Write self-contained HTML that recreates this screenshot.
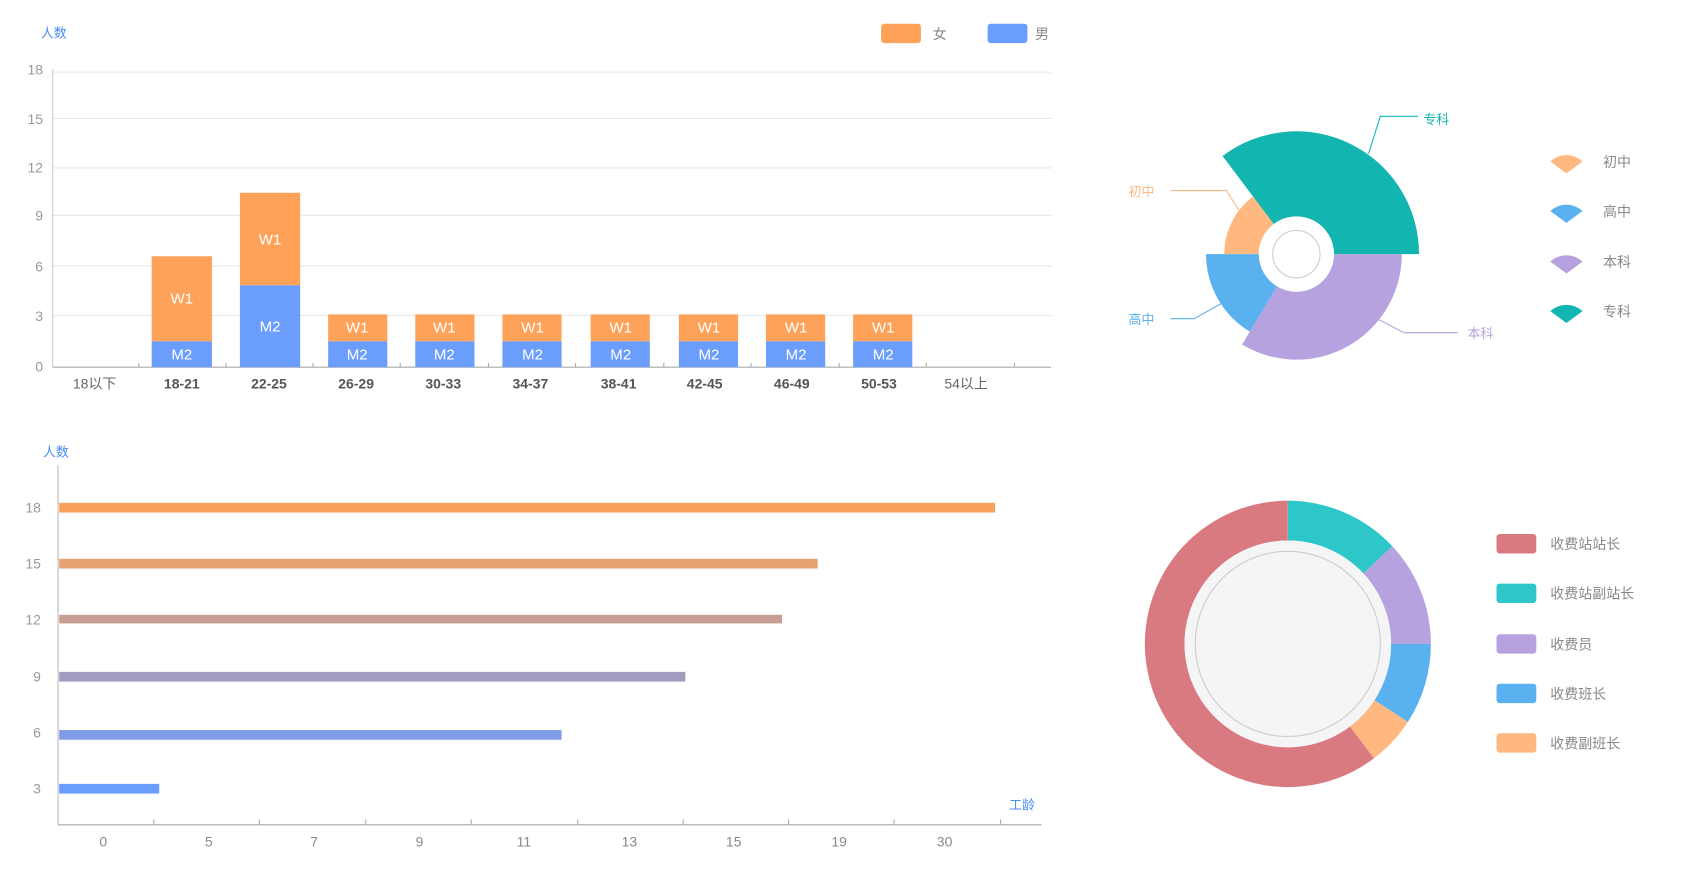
<!DOCTYPE html>
<html><head><meta charset="utf-8"><style>
html,body{margin:0;padding:0;background:#fff;}
svg{display:block;}
text{font-family:"Liberation Sans","Noto Sans CJK SC",sans-serif;}
</style></head><body>
<svg width="1688" height="884" viewBox="0 0 1569 821" preserveAspectRatio="none" xmlns="http://www.w3.org/2000/svg">
<text x="38" y="35" font-size="12" fill="#4a8df8">人数</text>
<rect x="819" y="22" width="37" height="18" rx="3" fill="#fea25a"/>
<text x="867" y="36" font-size="13" fill="#888">女</text>
<rect x="918" y="22" width="37" height="18" rx="3" fill="#6b9dfd"/>
<text x="962" y="36" font-size="13" fill="#888">男</text>
<g stroke="#e6e6e6" stroke-width="1">
<line x1="49" y1="67" x2="977" y2="67"/><line x1="49" y1="110" x2="977" y2="110"/>
<line x1="49" y1="156" x2="977" y2="156"/><line x1="49" y1="200" x2="977" y2="200"/>
<line x1="49" y1="247" x2="977" y2="247"/><line x1="49" y1="293" x2="977" y2="293"/>
</g>
<line x1="49" y1="64" x2="49" y2="341" stroke="#ccc"/>
<line x1="49" y1="341" x2="977" y2="341" stroke="#aaa"/>
<g stroke="#aaa"><line x1="129" y1="341" x2="129" y2="337"/><line x1="210" y1="341" x2="210" y2="337"/><line x1="291" y1="341" x2="291" y2="337"/><line x1="372" y1="341" x2="372" y2="337"/><line x1="454" y1="341" x2="454" y2="337"/><line x1="535" y1="341" x2="535" y2="337"/><line x1="617" y1="341" x2="617" y2="337"/><line x1="698" y1="341" x2="698" y2="337"/><line x1="780" y1="341" x2="780" y2="337"/><line x1="861" y1="341" x2="861" y2="337"/><line x1="943" y1="341" x2="943" y2="337"/></g>
<g font-size="13" fill="#999" text-anchor="end">
<text x="40" y="69">18</text><text x="40" y="115">15</text><text x="40" y="160">12</text><text x="40" y="205">9</text><text x="40" y="252">6</text><text x="40" y="298">3</text><text x="40" y="345">0</text>
</g>
<g fill="#fea25a">
<rect x="141" y="238" width="56" height="79"/><rect x="223" y="179" width="56" height="86"/>
<rect x="305" y="292" width="55" height="25"/><rect x="386" y="292" width="55" height="25"/><rect x="467" y="292" width="55" height="25"/><rect x="549" y="292" width="55" height="25"/><rect x="631" y="292" width="55" height="25"/><rect x="712" y="292" width="55" height="25"/><rect x="793" y="292" width="55" height="25"/>
</g>
<g fill="#6b9dfd">
<rect x="141" y="317" width="56" height="24"/><rect x="223" y="265" width="56" height="76"/>
<rect x="305" y="317" width="55" height="24"/><rect x="386" y="317" width="55" height="24"/><rect x="467" y="317" width="55" height="24"/><rect x="549" y="317" width="55" height="24"/><rect x="631" y="317" width="55" height="24"/><rect x="712" y="317" width="55" height="24"/><rect x="793" y="317" width="55" height="24"/>
</g>
<g font-size="14" fill="#fff" text-anchor="middle">
<text x="169" y="282">W1</text><text x="169" y="334">M2</text>
<text x="251" y="227">W1</text><text x="251" y="308">M2</text>
<text x="332" y="309">W1</text><text x="332" y="334">M2</text>
<text x="413" y="309">W1</text><text x="413" y="334">M2</text>
<text x="495" y="309">W1</text><text x="495" y="334">M2</text>
<text x="577" y="309">W1</text><text x="577" y="334">M2</text>
<text x="659" y="309">W1</text><text x="659" y="334">M2</text>
<text x="740" y="309">W1</text><text x="740" y="334">M2</text>
<text x="821" y="309">W1</text><text x="821" y="334">M2</text>
</g>
<g font-size="13" text-anchor="middle" fill="#555">
<text x="88" y="361" fill="#666">18以下</text>
<text x="169" y="361" font-weight="bold">18-21</text><text x="250" y="361" font-weight="bold">22-25</text><text x="331" y="361" font-weight="bold">26-29</text><text x="412" y="361" font-weight="bold">30-33</text><text x="493" y="361" font-weight="bold">34-37</text><text x="575" y="361" font-weight="bold">38-41</text><text x="655" y="361" font-weight="bold">42-45</text><text x="736" y="361" font-weight="bold">46-49</text><text x="817" y="361" font-weight="bold">50-53</text>
<text x="898" y="361" fill="#666">54以上</text>
</g>

<text x="40" y="424" font-size="12" fill="#4a8df8">人数</text>
<text x="938" y="752" font-size="12" fill="#4a8df8">工龄</text>
<line x1="54" y1="432" x2="54" y2="766" stroke="#bbb"/>
<line x1="54" y1="766" x2="968" y2="766" stroke="#aaa"/>
<g stroke="#aaa"><line x1="143" y1="766" x2="143" y2="761"/><line x1="241" y1="766" x2="241" y2="761"/><line x1="340" y1="766" x2="340" y2="761"/><line x1="438" y1="766" x2="438" y2="761"/><line x1="537" y1="766" x2="537" y2="761"/><line x1="635" y1="766" x2="635" y2="761"/><line x1="733" y1="766" x2="733" y2="761"/><line x1="831" y1="766" x2="831" y2="761"/><line x1="930" y1="766" x2="930" y2="761"/></g>
<g font-size="13" fill="#999" text-anchor="end">
<text x="38" y="476">18</text><text x="38" y="528">15</text><text x="38" y="580">12</text><text x="38" y="633">9</text><text x="38" y="685">6</text><text x="38" y="737">3</text>
</g>
<g font-size="13" fill="#888" text-anchor="middle">
<text x="96" y="786">0</text><text x="194" y="786">5</text><text x="292" y="786">7</text><text x="390" y="786">9</text><text x="487" y="786">11</text><text x="585" y="786">13</text><text x="682" y="786">15</text><text x="780" y="786">19</text><text x="878" y="786">30</text>
</g>
<rect x="55" y="467" width="870" height="9" fill="#f9a05a"/>
<rect x="55" y="519" width="705" height="9" fill="#e6a072"/>
<rect x="55" y="571" width="672" height="8" fill="#c89e94"/>
<rect x="55" y="624" width="582" height="9" fill="#a09cc0"/>
<rect x="55" y="678" width="467" height="9" fill="#7e9be6"/>
<rect x="55" y="728" width="93" height="9" fill="#6b9dfd"/>

<path d="M1138,236 A67,67 0 0 1 1164.7,182.5 L1183.9,208 A35,35 0 0 0 1170,236 Z" fill="#ffb980"/>
<path d="M1136.4,144.9 A114,114 0 0 1 1319,236 L1240,236 A35,35 0 0 0 1183.9,208 Z" fill="#13b5b1"/>
<path d="M1303,236 A98,98 0 0 1 1154.5,320 L1187,266 A35,35 0 0 0 1240,236 Z" fill="#b6a2de"/>
<path d="M1161.7,308 A84,84 0 0 1 1121,236 L1170,236 A35,35 0 0 0 1187,266 Z" fill="#5ab1ef"/>
<circle cx="1205" cy="236" r="22" fill="#fff" stroke="#ccc"/>
<polyline points="1272,143 1283,108 1318,108" fill="none" stroke="#13b5b1"/>
<polyline points="1088,177 1140,177 1152,196" fill="none" stroke="#ffb980"/>
<polyline points="1088,296 1110,296 1135,282" fill="none" stroke="#5ab1ef"/>
<polyline points="1282,297 1305,309 1355,309" fill="none" stroke="#b6a2de"/>
<g font-size="12">
<text x="1323" y="115" fill="#13b5b1">专科</text>
<text x="1049" y="182" fill="#ffb980">初中</text>
<text x="1049" y="301" fill="#5ab1ef">高中</text>
<text x="1364" y="314" fill="#b6a2de">本科</text>
</g>
<path d="M1441,150 A22,22 0 0 1 1471,150 L1456,161 Z" fill="#ffb980"/>
<path d="M1441,196 A22,22 0 0 1 1471,196 L1456,207 Z" fill="#5ab1ef"/>
<path d="M1441,243 A22,22 0 0 1 1471,243 L1456,254 Z" fill="#b6a2de"/>
<path d="M1441,289 A22,22 0 0 1 1471,289 L1456,300 Z" fill="#13b5b1"/>
<g font-size="13" fill="#888">
<text x="1490" y="155">初中</text><text x="1490" y="201">高中</text><text x="1490" y="248">本科</text><text x="1490" y="294">专科</text>
</g>

<path d="M1197,465 A133,133 0 0 1 1294.2,507.3 L1267.2,532.5 A96,96 0 0 0 1197,502 Z" fill="#2ec7c9"/>
<path d="M1294.2,507.3 A133,133 0 0 1 1330,598 L1293,598 A96,96 0 0 0 1267.2,532.5 Z" fill="#b6a2de"/>
<path d="M1330,598 A133,133 0 0 1 1308.6,670.5 L1277.5,650.3 A96,96 0 0 0 1293,598 Z" fill="#5ab1ef"/>
<path d="M1308.6,670.5 A133,133 0 0 1 1277.1,704.3 L1254.8,674.7 A96,96 0 0 0 1277.5,650.3 Z" fill="#ffb980"/>
<path d="M1277.1,704.3 A133,133 0 1 1 1197,465 L1197,502 A96,96 0 1 0 1254.8,674.7 Z" fill="#d87a80"/>
<circle cx="1197" cy="598" r="96" fill="#f5f5f5"/>
<circle cx="1197" cy="598" r="86" fill="#f5f5f5" stroke="#ccc"/>
<rect x="1391" y="496" width="37" height="18" rx="3" fill="#d87a80"/>
<rect x="1391" y="542" width="37" height="18" rx="3" fill="#2ec7c9"/>
<rect x="1391" y="589" width="37" height="18" rx="3" fill="#b6a2de"/>
<rect x="1391" y="635" width="37" height="18" rx="3" fill="#5ab1ef"/>
<rect x="1391" y="681" width="37" height="18" rx="3" fill="#ffb980"/>
<g font-size="13" fill="#888">
<text x="1441" y="510">收费站站长</text><text x="1441" y="556">收费站副站长</text><text x="1441" y="603">收费员</text><text x="1441" y="649">收费班长</text><text x="1441" y="695">收费副班长</text>
</g>
</svg>
</body></html>
